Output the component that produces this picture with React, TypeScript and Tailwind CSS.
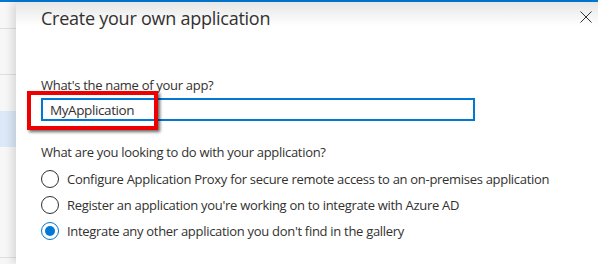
import { useState } from "react";

const options = [
  "Configure Application Proxy for secure remote access to an on-premises application",
  "Register an application you're working on to integrate with Azure AD",
  "Integrate any other application you don't find in the gallery",
];

export default function App() {
  const [selected, setSelected] = useState(2);
  const [name, setName] = useState("MyApplication");

  return (
    <div
      className="w-[598px] h-[264px] overflow-hidden bg-white text-[#323130] flex flex-col"
      style={{ fontFamily: '"Open Sans", "Noto Sans", sans-serif' }}
    >
      {/* top accent bar */}
      <div className="h-[2px] bg-[#0078d4] shrink-0" />

      <div className="flex flex-1 min-h-0">
        {/* blade behind the panel */}
        <div className="w-[16px] shrink-0 bg-[#f7f7f7] flex flex-col">
          <div className="h-[27px] border-b border-[#e1dfdd]" />
          <div className="h-[46px] border-b border-[#e1dfdd]" />
          <div className="h-[36px]" />
          <div className="h-[36px] bg-[#dce8f7]" />
          <div className="h-[111px] border-b border-[#e1dfdd]" />
        </div>

        {/* panel */}
        <div className="relative flex-1 bg-[linear-gradient(to_bottom,#e6e6e6,#ffffff_24px)] shadow-[-4px_0_8px_rgba(0,0,0,0.12)] pl-[25px] pr-[6px]">
          <div className="flex items-start justify-between">
            <h1 className="text-[18px] leading-[28px] pt-[2px] font-normal tracking-[-0.25px]">
              Create your own application
            </h1>
            <button className="mt-[9px] p-0" aria-label="Close">
              <svg width="12" height="12" viewBox="0 0 12 12" className="block">
                <path d="M0.5 0.5L11.5 11.5M11.5 0.5L0.5 11.5" stroke="#323130" strokeWidth="1" />
              </svg>
            </button>
          </div>

          <label className="block mt-[44px] text-[13px] leading-[18px] tracking-[-0.3px]">
            What's the name of your app?
          </label>
          <div className="mt-[4px] w-[434px] h-[23px] border-2 border-[#0078d4] flex items-center px-[7px]">
            <input
              value={name}
              onChange={(e) => setName(e.target.value)}
              className="w-full outline-none text-[13.5px] leading-[18px] tracking-[-0.4px] bg-transparent text-[#323130] caret-[#323130]"
              style={{ fontFamily: '"Open Sans", "Noto Sans", sans-serif' }}
            />
          </div>

          {/* red annotation box */}
          <div className="absolute left-[11px] top-[89px] w-[131px] h-[39px] border-[4px] border-[#ee0000] shadow-[2px_2px_3px_rgba(0,0,0,0.6)] pointer-events-none" />

          <p className="mt-[22px] text-[13px] leading-[18px] tracking-[-0.3px]">
            What are you looking to do with your application?
          </p>
          <div className="mt-[9px] flex flex-col gap-[8px]">
            {options.map((opt, i) => (
              <label
                key={opt}
                className="flex items-center gap-[8px] text-[13px] leading-[18px] tracking-[-0.3px] cursor-pointer"
                onClick={() => setSelected(i)}
              >
                <span
                  className={`w-[18px] h-[18px] rounded-full border flex items-center justify-center shrink-0 ${
                    selected === i ? "border-[#0078d4]" : "border-[#323130]"
                  }`}
                >
                  {selected === i && (
                    <span className="w-[10px] h-[10px] rounded-full bg-[#0078d4]" />
                  )}
                </span>
                <span>{opt}</span>
              </label>
            ))}
          </div>
        </div>
      </div>
    </div>
  );
}
